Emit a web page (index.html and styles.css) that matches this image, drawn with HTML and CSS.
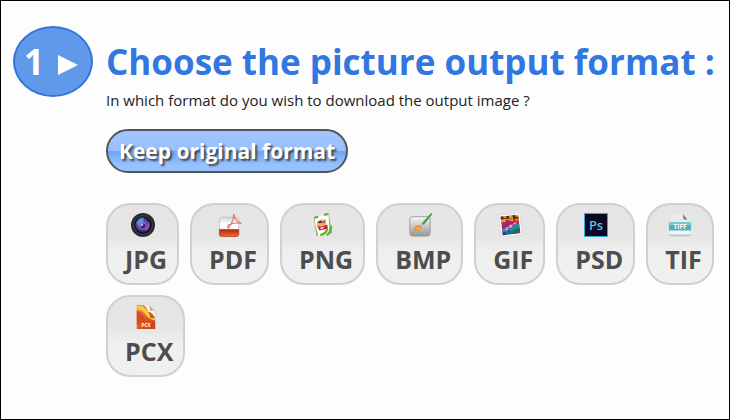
FILE: index.html
```html
<!DOCTYPE html>
<html lang="en">
<head>
  <meta charset="UTF-8" />
  <meta name="viewport" content="width=device-width, initial-scale=1.0" />
  <title>Picture output format</title>
  <link rel="stylesheet" href="styles.css">
</head>
<body>
  <main class="step">
    <div class="step-number">1 <svg width="20" height="20" viewBox="0 0 20 20"><path d="M0 0L20 10L0 20Z" fill="#fff"/></svg></div>
    <form class="step-content">
      <h1>Choose the picture output format :</h1>
      <p>In which format do you wish to download the output image ?</p>
      <button type="button" class="keep">Keep original format</button>

      <div class="formats">
        <button type="button" class="format">
          <svg viewBox="0 0 26 26">
            <defs>
              <radialGradient id="lens" cx="45%" cy="48%">
                <stop offset="0" stop-color="#8cc4f4"/>
                <stop offset=".35" stop-color="#6a6fd0"/>
                <stop offset=".7" stop-color="#5a379c"/>
                <stop offset="1" stop-color="#151232"/>
              </radialGradient>
            </defs>
            <circle cx="13" cy="13" r="13" fill="#2b2b2d"/>
            <circle cx="13" cy="13" r="10.8" fill="#3c3d40"/>
            <circle cx="13" cy="13" r="9.5" fill="#100e20"/>
            <circle cx="13" cy="13" r="8.6" fill="url(#lens)"/>
            <path d="M6 11Q8 5 14 5L13 9Q9 10 8 14Z" fill="#58b8e8" opacity=".65"/>
            <path d="M19 9Q23 15 16 20L14 17Q18 14 19 9Z" fill="#b052d0" opacity=".7"/>
            <circle cx="13" cy="14" r="2.6" fill="#30265f"/>
            <circle cx="12" cy="13" r="1.2" fill="#b7dcff"/>
          </svg>
          <span>JPG</span>
        </button>
        <button type="button" class="format">
          <svg viewBox="0 0 26 26">
            <defs>
              <linearGradient id="paper" x2="0" y2="1">
                <stop offset="0" stop-color="#d5d5d5"/>
                <stop offset=".35" stop-color="#fff"/>
                <stop offset="1" stop-color="#eee"/>
              </linearGradient>
              <linearGradient id="red" x2="0" y2="1">
                <stop offset="0" stop-color="#b42a0c"/>
                <stop offset="1" stop-color="#f06a2a"/>
              </linearGradient>
            </defs>
            <rect x="1.5" y="4.5" width="21" height="21" rx="3" fill="url(#paper)" stroke="#bbb" stroke-width=".7"/>
            <path d="M1.5 18H22.5V23Q22.5 25.5 20 25.5H4Q1.5 25.5 1.5 23Z" fill="url(#red)" stroke="#a8371b" stroke-width=".7"/>
            <path d="M11 17Q17 9 17 1Q18 9 25.5 11.5Q18 9.5 11 13Q10 16 11 17" fill="none" stroke="#e8706c" stroke-width="1.2"/>
          </svg>
          <span>PDF</span>
        </button>
        <button type="button" class="format">
          <svg viewBox="0 0 26 26">
            <path d="M3 5L19 1L23 22L6 25Z" fill="#78b84c"/>
            <path d="M5 4Q3 9 5 14L8 25Q14 26 19 21L20 20L19 1Z" fill="#fff"/>
            <path d="M4 5L8 4M14 2L19 1M10 24Q16 23 18 17M22 14Q21 22 17 24" fill="none" stroke="#66b434" stroke-width="2.5"/>
            <path d="M7 9Q11 6 16 7L17 14L8 17Q5 13 7 9Z" fill="#e7ae75"/>
            <path d="M7 10L11 8L12 10L16 8L15 10L9 11Z" fill="#582b1f"/>
            <path d="M7 14L10 15L13 14L18 13V17L14 18L9 19Z" fill="#c91e3d"/>
            <path d="M10 16L14 15L14 16L11 18Z" fill="#fff0e8"/>
          </svg>
          <span>PNG</span>
        </button>
        <button type="button" class="format">
          <svg viewBox="0 0 26 26">
            <defs>
              <linearGradient id="plate" x2="0" y2="1">
                <stop offset="0" stop-color="#f8f8f8"/>
                <stop offset="1" stop-color="#969696"/>
              </linearGradient>
            </defs>
            <rect x="2" y="4" width="22" height="21" rx="3" fill="url(#plate)" stroke="#999"/>
            <path d="M15 11L24 1L26 0L26 2L17 13Z" fill="#46a044"/>
            <path d="M12 14L15 11L17 13L14 16Z" fill="#a9bdca"/>
            <path d="M6 19Q8 13 12 13L15 16Q12 20 6 19Z" fill="#ee8b22"/>
            <path d="M8 18L12 15L13 17Z" fill="#ffcf52"/>
          </svg>
          <span>BMP</span>
        </button>
        <button type="button" class="format">
          <svg viewBox="0 0 26 26">
            <g transform="rotate(-7 13 13)">
              <rect x="2" y="1" width="23" height="24" fill="#fffef5" stroke="#d2d2c8" stroke-width=".7"/>
              <rect x="4" y="3" width="19" height="20" fill="#ba2450"/>
              <path d="M4 3H23V9H20V7H17V9H13V7H9V9H4Z" fill="#e7a52c"/>
              <path d="M4 3H7V5H10V3H13V6H4ZM17 3H20V5H23V7H17Z" fill="#3d2924"/>
              <path d="M13 5H16V8H13ZM19 7H23V10H19Z" fill="#ef5932"/>
              <path d="M4 13H8V11H12V9H15V12H12V14H8V17H4Z" fill="#753784"/>
              <path d="M4 17H8V15H12V13H17V11H20V13H16V16H11V18H4Z" fill="#e3a6d5"/>
              <path d="M4 18H10V16H15V14H19V12H23V18H18V23H4Z" fill="#2586a0"/>
              <path d="M13 20H17V18H23V23H13Z" fill="#246b50"/>
              <path d="M4 20H8V23H4ZM10 19H12V22H10Z" fill="#233f87"/>
            </g>
          </svg>
          <span>GIF</span>
        </button>
        <button type="button" class="format">
          <svg viewBox="0 0 26 26">
            <rect x="0" y="0" width="26" height="26" fill="#36b9ea"/>
            <rect x="1" y="1" width="24" height="24" fill="#0c0824"/>
            <text x="13" y="18" class="ps" text-anchor="middle">Ps</text>
          </svg>
          <span>PSD</span>
        </button>
        <button type="button" class="format">
          <svg viewBox="0 0 26 26">
            <ellipse cx="13" cy="24" rx="12" ry="1.5" fill="#c3c3c3"/>
            <path d="M4 1H16L21 7V23H4Z" fill="#ececec"/>
            <path d="M16 1L21 7H17Z" fill="#777"/>
            <path d="M2 11H24V22Q24 23 22 23H4Q2 23 2 22Z" fill="#f6f6f6"/>
            <rect x="1" y="10" width="24" height="9" rx="1" fill="#4cb4bd"/>
            <path d="M1 10H25V13H1Z" fill="#79cbd0"/>
            <text x="13" y="17" class="tiff" text-anchor="middle">TIFF</text>
          </svg>
          <span>TIF</span>
        </button>
        <button type="button" class="format">
          <svg viewBox="0 0 26 26">
            <defs>
              <linearGradient id="orange" x2="1" y2="1">
                <stop offset="0" stop-color="#f2a53c"/>
                <stop offset=".5" stop-color="#dc5b22"/>
                <stop offset="1" stop-color="#c53b19"/>
              </linearGradient>
            </defs>
            <path d="M3 0H17L23 7V26H3Z" fill="url(#orange)"/>
            <path d="M3 1H9Q16 5 18 14H23V17Q13 14 11 8Q7 4 3 5Z" fill="#f5c64a"/>
            <path d="M3 6Q8 7 12 16V21H3Z" fill="#d84c20"/>
            <path d="M10 0H17L23 7V16Q21 8 15 7Q14 2 10 0Z" fill="#f4f5ed"/>
            <path d="M16 1Q19 4 17 6Q21 5 23 8L17 1Z" fill="#8c9c85"/>
            <text x="13" y="24" class="pcx" text-anchor="middle">PCX</text>
          </svg>
          <span>PCX</span>
        </button>
      </div>
    </form>
  </main>
</body>
</html>
```
FILE: styles.css
```css
* {
  box-sizing: border-box;
}
body {
  margin: 0;
  min-height: 100vh;
  border: 1px solid #000;
  background: #fdfdfd;
  color: #222;
  font-family: "Open Sans", sans-serif;
}
.step {
  display: flex;
  align-items: flex-start;
  gap: 13px;
  padding: 25px 8px 24px 12px;
}
.step-number {
  display: flex;
  flex: none;
  align-items: center;
  justify-content: center;
  gap: 14px;
  width: 80px;
  height: 71px;
  padding-right: 4px;
  border: 2px solid #3274dc;
  border-radius: 50%;
  background: #6199ea;
  color: #fff;
  font-size: 35px;
  font-weight: bold;
}
.step-number svg {
  margin-top: 6px;
}
.step-content {
  flex: 1;
  min-width: 0;
}
h1 {
  margin: 12px 0 0;
  color: #3277e1;
  font-size: 35px;
  line-height: 48px;
}
p {
  margin: 4px 0 19px;
  font-size: 15px;
  line-height: 20px;
}
button {
  font-family: inherit;
  font-weight: bold;
  cursor: pointer;
}
.keep {
  display: block;
  height: 44px;
  padding: 0 11px;
  border: 2px solid #4e5759;
  border-radius: 22px;
  background: linear-gradient(#a0c6ff 0%, #98c0fe 50%, #6ca4f5 51%, #98c1ff 85%);
  color: #fff;
  font-size: 21px;
  text-shadow: 2px 2px 2px #444;
}
.formats {
  display: flex;
  flex-wrap: wrap;
  gap: 10px 11px;
  margin-top: 30px;
}
.format {
  display: flex;
  flex-direction: column;
  align-items: center;
  height: 82px;
  padding: 8px 10px;
  border: 2px solid #d0d0d0;
  border-radius: 24px;
  background: linear-gradient(#e5e5e5, #e6e6e6 40%, #efefef 60%, #f0f0f0);
  color: #4d4d4d;
  font-size: 25px;
  line-height: 32px;
}
.format svg {
  width: 26px;
  height: 26px;
  margin-bottom: 6px;
}
.format span {
  padding-left: 7px;
}
.ps {
  fill: #4cc5ee;
  font-size: 14px;
  font-weight: 600;
}
.tiff {
  fill: #fff;
  font-size: 7px;
}
.pcx {
  fill: #fff;
  font-size: 5px;
}
```
